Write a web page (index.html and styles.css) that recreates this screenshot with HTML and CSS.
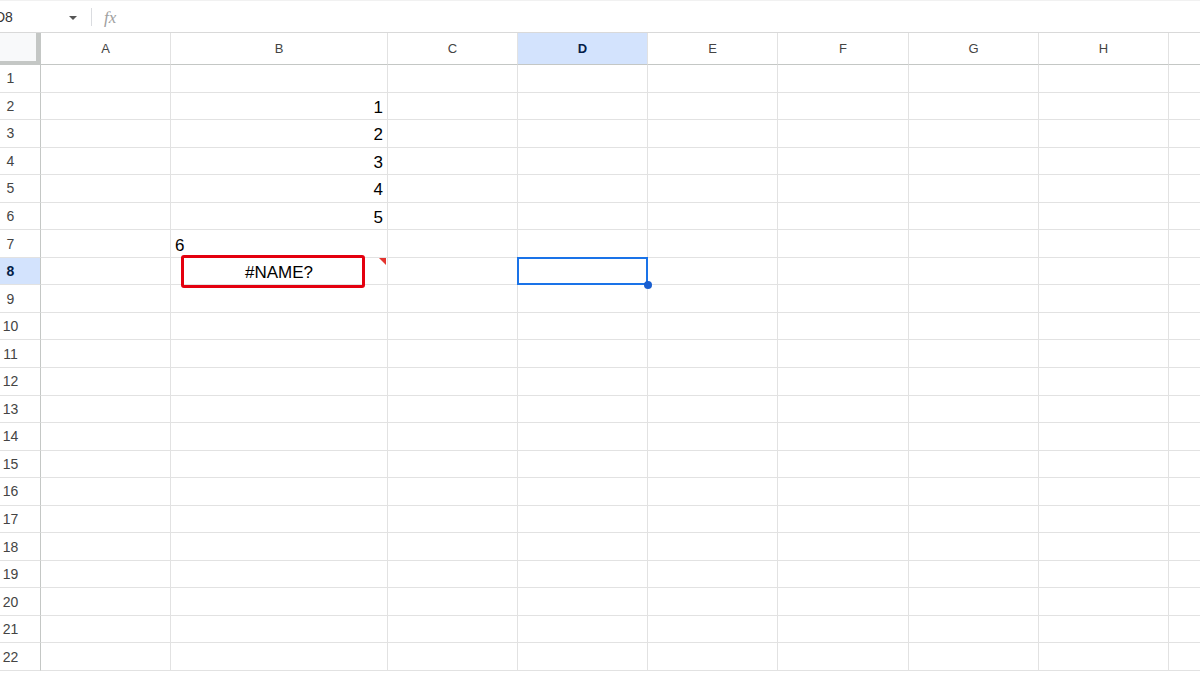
FILE: index.html
```html
<!DOCTYPE html>
<html>

<head>
    <title>Sheet - D8</title>
    <link rel="stylesheet" href="styles.css">
</head>

<body>
    <div class="sheet">
        <div class="formula">
            <div class="formula-name">D8</div>
            <div class="formula-arrow"></div>
            <div class="formula-sep"></div>
            <div class="formula-fx">fx</div>
            <div class="formula-input"></div>
        </div>

        <div class="grid" id="grid"></div>
    </div>

    <script src="script.js"></script>
</body>

</html>
```

FILE: styles.css
```css
body {
    margin: 0;
    background: #fff;
    font-family: "Liberation Sans", Arial, sans-serif;
    overflow: hidden;
}

.sheet {
    display: flex;
    flex-direction: column;
    height: 675px;
}

.formula {
    height: 33px;
    box-sizing: border-box;
    border-bottom: 1px solid #d9d9d9;
    border-top: 1px solid #f1f1f1;
    display: flex;
    align-items: center;
}

.formula-name {
    margin-left: -5px;
    width: 74px;
    font-size: 14px;
    color: #333;
}

.formula-arrow {
    width: 0;
    height: 0;
    border-left: 4px solid transparent;
    border-right: 4px solid transparent;
    border-top: 4px solid #555;
    margin-top: 2px;
}

.formula-sep {
    width: 1px;
    height: 18px;
    background: #dadce0;
    margin-left: 14px;
}

.formula-fx {
    margin-left: 12px;
    margin-top: 3px;
    font-family: "Liberation Serif", serif;
    font-style: italic;
    font-size: 17px;
    color: #a0a0a0;
}

.grid {
    display: grid;
    grid-template-columns: 41px 130px 217px 130px 130px 130px 131px 130px 130px 32px;
    grid-template-rows: 32px repeat(22, 27.55px);
}

.cell {
    box-sizing: border-box;
    border-right: 1px solid #e2e2e2;
    border-bottom: 1px solid #e2e2e2;
    display: flex;
    align-items: center;
    font-size: 17px;
    color: #000;
    position: relative;
    padding: 4px 4px 0;
}

.cell.num {
    justify-content: flex-end;
}

.col-head {
    justify-content: center;
    font-size: 13px;
    color: #444;
    border-bottom-color: #c4c7c5;
    padding: 0;
}

.col-head.active {
    background: #d3e3fd;
    color: #041e49;
    font-weight: bold;
}

.row-head {
    justify-content: center;
    font-size: 14px;
    color: #444;
    border-right-color: #c4c7c5;
    padding: 0 19px 0 0;
}

.row-head.active {
    background: #d3e3fd;
    color: #041e49;
    font-weight: bold;
}

.corner {
    background: #f8f9fa;
    border-right: 5px solid #c4c7c5;
    border-bottom: 4px solid #c4c7c5;
}

.cell.error {
    justify-content: center;
}

.error-box {
    position: absolute;
    left: 10px;
    right: 22px;
    top: -3px;
    bottom: -4px;
    border: 3px solid #e4000f;
    border-radius: 3px;
}

.error-flag {
    position: absolute;
    right: 1px;
    top: 0;
    width: 0;
    height: 0;
    border-left: 7px solid transparent;
    border-top: 7px solid #e3342f;
}

.cell.selected::after {
    content: "";
    position: absolute;
    left: -1px;
    top: -1px;
    right: -1px;
    bottom: -1px;
    border: 2px solid #1a73e8;
}

.cell.selected::before {
    content: "";
    position: absolute;
    right: -5px;
    bottom: -5px;
    width: 8px;
    height: 8px;
    border-radius: 50%;
    background: #1a5fd0;
    z-index: 2;
}
```

FILE: script.js
```js
var grid = document.getElementById('grid')
var cols = ['A', 'B', 'C', 'D', 'E', 'F', 'G', 'H', '']

var data = {
    'B2': 1, 'B3': 2, 'B4': 3, 'B5': 4, 'B6': 5
}

function cell(cls, text) {
    var div = document.createElement('div')
    div.className = 'cell ' + cls
    if (text !== undefined) div.textContent = text
    grid.appendChild(div)
    return div
}

// column headers
cell('corner')
cols.forEach(function (c) {
    cell('col-head' + (c == 'D' ? ' active' : ''), c)
})

// rows
for (var r = 1; r <= 22; r++) {
    cell('row-head' + (r == 8 ? ' active' : ''), r)
    cols.forEach(function (c) {
        var key = c + r
        if (data[key] !== undefined) {
            cell('num', data[key])
        } else if (key == 'B7') {
            cell('text', '6')
        } else if (key == 'B8') {
            var err = cell('error', '#NAME?')
            var box = document.createElement('div')
            box.className = 'error-box'
            err.appendChild(box)
            var flag = document.createElement('div')
            flag.className = 'error-flag'
            err.appendChild(flag)
        } else if (key == 'D8') {
            cell('selected')
        } else {
            cell('')
        }
    })
}
```
